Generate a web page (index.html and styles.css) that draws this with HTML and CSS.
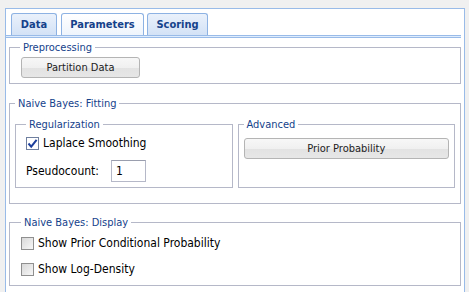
FILE: index.html
```html
<!DOCTYPE html>
<html lang="en">
  <head>
    <meta charset="UTF-8" />
    <title>Naive Bayes Parameters</title>
    <link rel="stylesheet" href="styles.css">
  </head>
  <body>
    <div class="panel">
      <!-- Tab strip -->
      <div class="tabs">
        <div class="tab tab-data">Data</div>
        <div class="tab tab-params active">Parameters</div>
        <div class="tab tab-scoring">Scoring</div>
      </div>
      <div class="tab-bar"></div>

      <div class="panel-body">
        <!-- Preprocessing -->
        <fieldset class="group group-pre">
          <legend>Preprocessing</legend>
          <button class="btn btn-partition">Partition Data</button>
        </fieldset>

        <!-- Fitting -->
        <fieldset class="group group-fit">
          <legend>Naive Bayes: Fitting</legend>
          <div class="cols">
            <fieldset class="group group-sub group-reg">
              <legend>Regularization</legend>
              <label class="check">
                <span class="box checked">
                  <svg width="11" height="11" viewBox="0 0 11 11"><path d="M1.5 5.5 L4.2 8.6 L9.6 1.8" fill="none" stroke="#1d3f9c" stroke-width="2"/></svg>
                </span>
                Laplace Smoothing
              </label>
              <div class="field">
                <span class="field-label">Pseudocount:</span>
                <input class="text-input" type="text" value="1" />
              </div>
            </fieldset>
            <fieldset class="group group-sub group-adv">
              <legend>Advanced</legend>
              <button class="btn btn-wide">Prior Probability</button>
            </fieldset>
          </div>
        </fieldset>

        <!-- Display -->
        <fieldset class="group group-display">
          <legend>Naive Bayes: Display</legend>
          <label class="check"><span class="box"></span>Show Prior Conditional Probability</label>
          <label class="check"><span class="box"></span>Show Log-Density</label>
        </fieldset>
      </div>
    </div>
  </body>
</html>
```

FILE: styles.css
```css
:root {
  --panel-border: #99bbe8;
  --tab-border: #8db2e3;
  --navy: #15428b;
  --field-border: #b5b8c8;
}

* {
  box-sizing: border-box;
}

body {
  margin: 0;
  height: 100vh;
  background: #f0f0f0;
  font-family: "DejaVu Sans Condensed", "DejaVu Sans", sans-serif;
  font-stretch: condensed;
  font-size: 12px;
  color: #000;
  overflow: hidden;
}

.panel {
  margin: 8px 4px 0 5px;
  height: calc(100vh - 8px);
  background: #fff;
  border: 1px solid var(--panel-border);
  border-bottom: none;
}

/* Tabs */
.tabs {
  display: flex;
  padding: 4px 0 0 5px;
}

.tab {
  height: 22px;
  line-height: 21px;
  text-align: center;
  margin-right: 4px;
  border: 1px solid var(--tab-border);
  border-bottom: none;
  border-radius: 3px 3px 0 0;
  background: linear-gradient(#eaf1fb, #d3e2f6);
  color: var(--navy);
  font-size: 11px;
  font-weight: bold;
}

.tab-data {
  width: 46px;
}

.tab-params {
  width: 83px;
  margin-right: 3px;
}

.tab-scoring {
  width: 61px;
}

.tab.active {
  background: linear-gradient(#ffffff, #eef4fc);
}

.tab-bar {
  height: 3px;
  margin-right: 3px;
  border-top: 1px solid var(--panel-border);
  border-bottom: 1px solid var(--panel-border);
  background: #deecfd;
}

.panel-body {
  padding: 3px 3px 0 3px;
}

/* Fieldsets */
.group {
  margin: 0;
  min-width: 0;
  border: 1px solid var(--field-border);
}

.group legend {
  padding: 0 3px;
  font-size: 11px;
  line-height: 13px;
  color: var(--navy);
}

.group-pre {
  padding: 3px 10px 5px 10px;
}

.group-fit {
  margin-top: 13px;
  padding: 8px 5px 15px 5px;
}

.cols {
  display: grid;
  grid-template-columns: 1fr 1fr;
  gap: 5px;
}

.group-reg {
  padding: 4px 10px 5px 10px;
}

.group-adv {
  padding: 7px 5px 5px 5px;
}

.group-display {
  margin-top: 12px;
  padding: 6px 10px 8px 11px;
}

/* Buttons */
.btn {
  display: block;
  height: 21px;
  padding: 0;
  font: inherit;
  font-size: 11px;
  color: #222;
  border: 1px solid #b4b4b4;
  border-radius: 3px;
  background: linear-gradient(#f7f7f7 0%, #f0f0f0 50%, #e2e2e2 52%, #e7e7e7 100%);
}

.btn-partition {
  width: 119px;
  margin-left: 1px;
}

.btn-wide {
  width: 100%;
}

/* Checkboxes */
.check {
  display: flex;
  align-items: center;
  gap: 4px;
  height: 16px;
}

.group-display .check + .check {
  margin-top: 10px;
}

.box {
  display: flex;
  align-items: center;
  justify-content: center;
  width: 13px;
  height: 13px;
  border: 1px solid #8f8f8f;
  background: linear-gradient(135deg, #d8d8d8, #f7f7f7);
}

.box.checked {
  border-color: #6f7f9f;
  background: #fff;
}

/* Text field */
.field {
  display: flex;
  align-items: center;
  margin-top: 9px;
}

.field-label {
  width: 85px;
}

.text-input {
  width: 35px;
  height: 22px;
  padding: 0 4px;
  font: inherit;
  color: #000;
  border: 1px solid var(--field-border);
  border-top-color: #9a9eae;
  background: #fff;
}
```
